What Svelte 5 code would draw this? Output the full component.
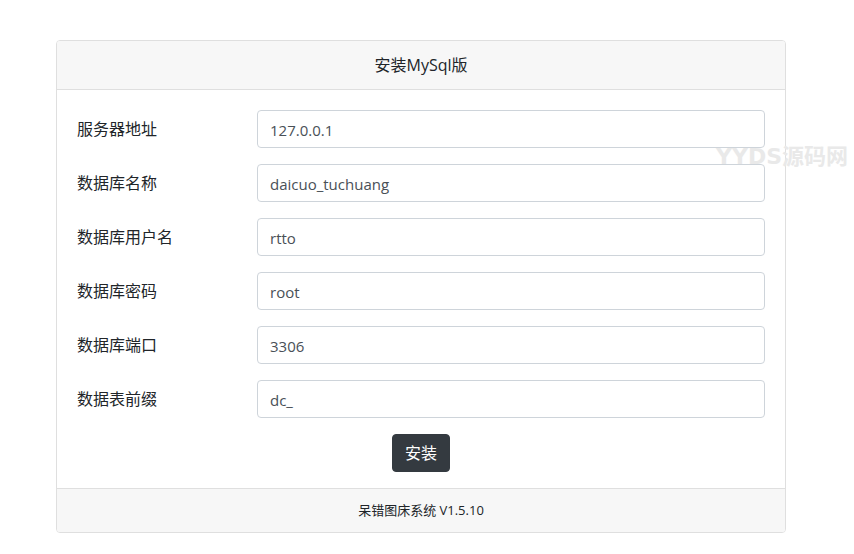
<script lang="ts">
  const fields = $state([
    { id: 'hostname', label: '服务器地址', value: '127.0.0.1' },
    { id: 'database', label: '数据库名称', value: 'daicuo_tuchuang' },
    { id: 'username', label: '数据库用户名', value: 'rtto' },
    { id: 'password', label: '数据库密码', value: 'root' },
    { id: 'hostport', label: '数据库端口', value: '3306' },
    { id: 'prefix', label: '数据表前缀', value: 'dc_' },
  ]);

  const install = (event: SubmitEvent) => {
    event.preventDefault();
  };
</script>

<main class="page">
  <form class="card" onsubmit={install}>
    <header class="card-header">安装MySql版</header>

    <div class="card-body">
      {#each fields as field (field.id)}
        <div class="form-row">
          <label for={field.id}>{field.label}</label>
          <input id={field.id} name={field.id} type="text" autocomplete="off" spellcheck="false" bind:value={field.value} />
        </div>
      {/each}
      <button type="submit">安装</button>
    </div>

    <footer class="card-footer">呆错图床系统 V1.5.10</footer>
  </form>

  <div class="watermark" aria-hidden="true"><span>YYDS</span>源码网</div>
</main>

<style>
  :global(body) {
    margin: 0;
    background: #fff;
  }

  .page {
    position: relative;
    padding: 40px 68px 20px 56px;
    font-family: "Open Sans", "Noto Sans CJK SC", sans-serif;
    font-size: 16px;
    line-height: 24px;
    color: #212529;
  }

  .card {
    overflow: hidden;
    border: 1px solid #dfdfdf;
    border-radius: 4px;
    background: #fff;
  }

  .card-header,
  .card-footer {
    padding: 12px 20px;
    background: #f7f7f7;
    text-align: center;
  }

  .card-header {
    border-bottom: 1px solid #dfdfdf;
  }

  .card-footer {
    border-top: 1px solid #dfdfdf;
    font-size: 13px;
    line-height: 19px;
  }

  .card-body {
    display: flex;
    flex-direction: column;
    gap: 16px;
    padding: 20px 20px 16px;
  }

  .form-row {
    display: grid;
    grid-template-columns: 150px minmax(0, 1fr);
    gap: 30px;
    align-items: center;
  }

  input {
    box-sizing: border-box;
    width: 100%;
    height: 38px;
    border: 1px solid #ced4da;
    border-radius: 4px;
    padding: 7px 12px 5px;
    background: #fff;
    font: inherit;
    font-size: 15px;
    color: #495057;
  }

  input:focus {
    border-color: #80bdff;
    outline: 0;
    box-shadow: 0 0 0 3px rgba(0, 123, 255, 0.25);
  }

  button {
    align-self: center;
    border: 1px solid #343a40;
    border-radius: 4px;
    padding: 6px 12px;
    background: #343a40;
    font: inherit;
    color: #fff;
    cursor: pointer;
  }

  .watermark {
    position: absolute;
    top: 142px;
    right: 6px;
    font-family: "Noto Sans CJK SC", sans-serif;
    font-size: 22px;
    font-weight: 700;
    color: #e9e9e9;
    pointer-events: none;
  }

  .watermark span {
    font-family: "DejaVu Sans", sans-serif;
  }
</style>
